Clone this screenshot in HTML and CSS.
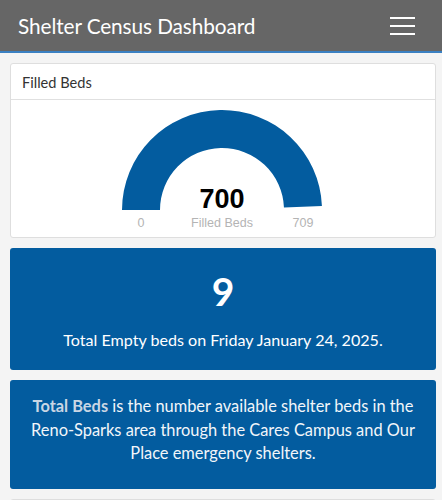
FILE: index.html
```html
<!DOCTYPE html>
<html>
<head>
<meta charset="utf-8">
<link rel="stylesheet" href="styles.css">
</head>
<body>
<header class="topbar">
  <h1 class="title">Shelter Census Dashboard</h1>
  <button class="menu" aria-label="Menu"><span></span><span></span><span></span></button>
</header>
<main class="content">
  <section class="card">
    <div class="card-head">Filled Beds</div>
    <div class="card-body">
      <svg class="gauge" width="260" height="137" viewBox="0 0 260 137">
        <path d="M30 110 A100 100 0 0 1 229.92 105.99 L191.95 107.51 A62 62 0 0 0 68 110 Z" fill="#035c9f"/>
        <text x="130" y="108" class="g-value" text-anchor="middle">700</text>
        <text x="130" y="127" class="g-label" text-anchor="middle">Filled Beds</text>
        <text x="49" y="127" class="g-label" text-anchor="middle">0</text>
        <text x="211" y="127" class="g-label" text-anchor="middle">709</text>
      </svg>
    </div>
  </section>
  <section class="stat">
    <div class="stat-num">9</div>
    <div class="stat-text">Total Empty beds on Friday January 24, 2025.</div>
  </section>
  <section class="note">
    <p><strong>Total Beds</strong> is the number available shelter beds in the Reno-Sparks area through the Cares Campus and Our Place emergency shelters.</p>
  </section>
  <section class="card next"></section>
</main>
</body>
</html>
```
FILE: styles.css
```css
html, body {
  margin: 0;
  padding: 0;
  background: #f4f4f4;
  font-family: Lato, "Open Sans", sans-serif;
  overflow: hidden;
  height: 500px;
}
.topbar {
  height: 51px;
  background: #666666;
  border-bottom: 2px solid #3a80c2;
  display: flex;
  align-items: center;
  justify-content: space-between;
  padding: 0 18px 0 18px;
  box-sizing: content-box;
}
.title {
  margin: 0;
  font-size: 20.8px;
  font-weight: 400;
  color: #ffffff;
  letter-spacing: -0.1px;
}
.menu {
  border: 0;
  background: transparent;
  padding: 0;
  width: 26px;
  height: 18px;
  display: flex;
  flex-direction: column;
  justify-content: space-between;
  margin-right: 8px;
}
.menu span {
  display: block;
  height: 2px;
  width: 25px;
  background: #ffffff;
}
.content {
  padding: 10px 6px 0 10px;
  display: flex;
  flex-direction: column;
  gap: 10px;
}
.card {
  background: #ffffff;
  border: 1px solid #dedede;
  border-radius: 3px;
}
.card-head {
  height: 35px;
  line-height: 37px;
  padding-left: 11px;
  font-size: 14.6px;
  color: #333333;
  border-bottom: 1px solid #e0e0e0;
}
.card-body {
  display: flex;
  justify-content: center;
}
.gauge {
  display: block;
  margin-left: -2px;
}
.g-value {
  font-family: "Liberation Sans", Arial, sans-serif;
  font-weight: 700;
  font-size: 27px;
  fill: #000000;
}
.g-label {
  font-family: "Liberation Sans", Arial, sans-serif;
  font-size: 12.5px;
  fill: #b4b4b4;
}
.stat {
  background: #035c9f;
  border-radius: 3px;
  height: 122px;
  color: #ffffff;
  text-align: center;
  display: flex;
  flex-direction: column;
  align-items: center;
}
.stat-num {
  font-size: 39px;
  font-weight: 700;
  margin-top: 19px;
  line-height: 48px;
}
.stat-text {
  font-size: 16.1px;
  margin-top: 15px;
}
.note {
  background: #035c9f;
  border-radius: 3px;
  height: 109px;
  color: #f2f6fa;
  text-align: center;
  padding: 0 12px;
  box-sizing: border-box;
}
.note p {
  margin: 14px 0 0;
  font-size: 16.4px;
  line-height: 23.5px;
}
.note strong {
  color: #c9d6e4;
}
.next {
  height: 40px;
}
```
